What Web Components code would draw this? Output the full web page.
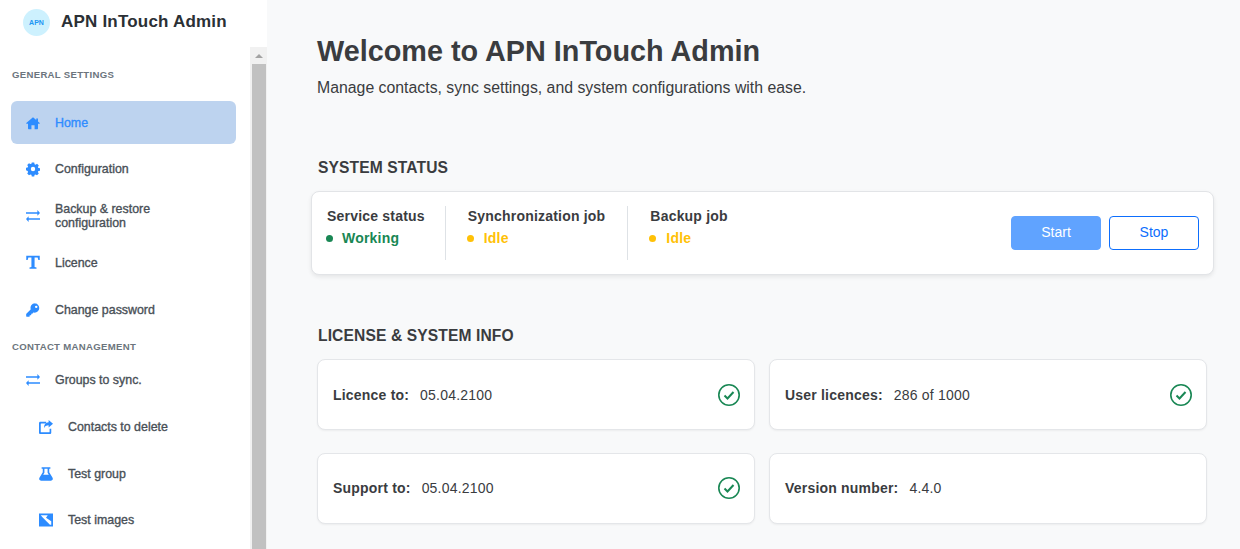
<!DOCTYPE html>
<html lang="en">
<head>
<meta charset="utf-8">
<title>APN InTouch Admin</title>
<style>
	html, body { margin: 0; height: 100%; overflow: hidden; }
	body { font-family: "Liberation Sans", Arial, sans-serif; color: #3a3c3f; background: #f8f9fa; }
</style>
</head>
<body>
<admin-shell>
	<side-bar slot="side">
		<nav-heading>General settings</nav-heading>
		<nav-item icon="home" active style="margin-top:20px;margin-bottom:3px">Home</nav-item>
		<nav-item icon="cog">Configuration</nav-item>
		<nav-item icon="exchange">Backup &amp; restore configuration</nav-item>
		<nav-item icon="font">Licence</nav-item>
		<nav-item icon="key">Change password</nav-item>
		<nav-heading style="margin-top:10px;margin-bottom:5px">Contact management</nav-heading>
		<nav-item icon="exchange">Groups to sync.</nav-item>
		<nav-item icon="share" sub>Contacts to delete</nav-item>
		<nav-item icon="flask" sub style="margin-bottom:3px">Test group</nav-item>
		<nav-item icon="image" sub>Test images</nav-item>
	</side-bar>
	<page-head></page-head>
	<section-title style="margin:58px 0 0 1px">System status</section-title>
	<status-card style="margin-top:13px">
		<status-cell label="Service status" state="Working" tone="ok"></status-cell>
		<status-cell label="Synchronization job" state="Idle" tone="idle"></status-cell>
		<status-cell label="Backup job" state="Idle" tone="idle"></status-cell>
	</status-card>
	<section-title style="margin:51px 0 0 1px">License &amp; system info</section-title>
	<info-grid>
		<info-card label="Licence to:" value="05.04.2100" check></info-card>
		<info-card label="User licences:" value="286 of 1000" check></info-card>
		<info-card label="Support to:" value="05.04.2100" check style="padding-bottom:1px"></info-card>
		<info-card label="Version number:" value="4.4.0" style="padding-bottom:1px"></info-card>
	</info-grid>
</admin-shell>

<script>
const ICONS = {
	home: '<path d="M8 1.500 .3 8.100c-.3.3-.1.700.3.700h1.700v5.600c0 .4.3.7.7.7h3.200v-4.600h3.600v4.600h3.200c.4 0 .7-.3.7-.7V8.800h1.700c.4 0 .6-.4.3-.7l-2-1.700V2.800h-2v1.900z"/>',
	cog: '<path fill-rule="evenodd" d="M6.600.6h2.800l.4 1.900c.4.1.8.3 1.100.5l1.700-1 2 2-1 1.700c.2.4.4.7.5 1.100l1.900.4v2.800l-1.900.4c-.1.4-.3.8-.5 1.100l1 1.700-2 2-1.700-1c-.3.2-.7.4-1.100.5l-.4 1.900H6.600l-.4-1.900c-.4-.1-.8-.3-1.100-.5l-1.700 1-2-2 1-1.700c-.2-.3-.4-.7-.5-1.100L0 9.400V6.600l1.900-.4c.1-.4.3-.7.5-1.100l-1-1.700 2-2 1.700 1c.3-.2.7-.4 1.100-.5zM8 5.500a2.500 2.500 0 1 0 0 5 2.500 2.500 0 0 0 0-5z"/>',
	exchange: '<path d="M0 3.600h13V1.200L16 4.500l-3 3.300V5.400H0zM16 10.600H3V8.200L0 11.500l3 3.300v-2.400H16z"/>',
	font: '<path transform="translate(0 -1)" d="M.3 .6h15.400v5h-1.600l-.8-2.800H9.800v10.800l2.200.5v1.500H4v-1.500l2.200-.5V2.800H2.700l-.8 2.800H.3z"/>',
	key: '<path fill-rule="evenodd" d="M10.300.4a5.300 5.300 0 0 0-5 7L.4 12.300c-.1.1-.2.3-.2.4v2.400c0 .3.3.6.6.6h2.900c.3 0 .5-.2.5-.5V13.900h1.300c.3 0 .5-.2.5-.5V12.200h1.200l1.200-1.300c.4.1.9.2 1.400.2a5.300 5.300 0 0 0 0-10.700zM11.700 3a1.400 1.400 0 1 1 0 2.800 1.400 1.400 0 0 1 0-2.800z"/>',
	share: '<path d="M1.500 2h6.700v1.900H2.700c-.4 0-.7.3-.7.7v8.700c0 .4.3.7.7.7h8.700c.4 0 .7-.3.7-.7v-3.300h1.900v4.500c0 .8-.7 1.500-1.500 1.500H1.500C.7 16 0 15.300 0 14.500V3.500C0 2.700.7 2 1.500 2z"/><path d="M11 0l5 4.300-5 4.300V6C8.300 6 6.700 6.800 5.800 9.400 5.600 5.600 7.600 3 11 2.700z"/>',
	flask: '<path fill-rule="evenodd" d="M3 .2h10v1.800h-1.300v4.100l3.800 6.300c.9 1.400-.1 3.300-1.800 3.300H2.300c-1.700 0-2.700-1.900-1.800-3.300l3.800-6.300V2H3zM6.200 2v4.600L4.800 8.800h6.400L9.800 6.600V2z"/>',
	image: '<path fill-rule="evenodd" d="M0 .5h16v15H0zM2 2.500l2.500 3 8 8H14V9.500L8 5.500l2-3z"/>'
};

class AdminShell extends HTMLElement {
	connectedCallback() {
		this.attachShadow( { mode: 'open' } );
		this.shadowRoot.innerHTML = `
			<style>
				:host { display: flex; height: 100vh; overflow: hidden; }
				aside { flex: none; width: 267px; background: #fff; }
				main { flex: 1; min-width: 0; padding: 31px 27px 0 50px; box-sizing: border-box; }
			</style>
			<aside><slot name="side"></slot></aside>
			<main><slot></slot></main>
		`;
	}
}

class SideBar extends HTMLElement {
	connectedCallback() {
		this.attachShadow( { mode: 'open' } );
		this.shadowRoot.innerHTML = `
			<style>
				:host { display: flex; flex-direction: column; height: 100vh; overflow: hidden; }
				.brand { flex: none; height: 47px; box-sizing: border-box; display: flex; align-items: flex-start; gap: 11px; padding: 9px 0 0 23px; }
				.logo { width: 27px; height: 27px; border-radius: 50%; background: #cdf1fe; color: #2196f3; display: flex; align-items: center; justify-content: center; font-size: 7px; font-weight: 700; }
				.name { font-size: 17px; font-weight: 700; color: #2b3035; line-height: 25px; letter-spacing: .2px; }
				.body { flex: 1; display: flex; min-height: 0; }
				.list { flex: 1; min-width: 0; padding: 22px 14px 0 11px; overflow: hidden; }
				.bar { flex: none; width: 17px; background: #f1f1f1; display: flex; flex-direction: column; align-items: center; }
				.up { flex: none; height: 17px; display: flex; align-items: center; justify-content: center; }
				.up i { width: 0; height: 0; border: 4px solid transparent; border-top: 0; border-bottom: 4px solid #a3a3a3; }
				.thumb { flex: 1; align-self: stretch; margin: 0 1px 0 2px; background: #c1c1c1; }
			</style>
			<div class="brand"><div class="logo">APN</div><div class="name">APN InTouch Admin</div></div>
			<div class="body">
				<div class="list"><slot></slot></div>
				<div class="bar"><div class="up"><i></i></div><div class="thumb"></div></div>
			</div>
		`;
	}
}

class NavHeading extends HTMLElement {
	connectedCallback() {
		this.attachShadow( { mode: 'open' } );
		this.shadowRoot.innerHTML = `
			<style>
				:host { display: block; padding-left: 1px; font-size: 9.6px; line-height: 12px; font-weight: 700; color: #6c757d; text-transform: uppercase; letter-spacing: .3px; }
			</style>
			<slot></slot>
		`;
	}
}

class NavItem extends HTMLElement {
	connectedCallback() {
		const icon = ICONS[ this.getAttribute( 'icon' ) ];
		this.attachShadow( { mode: 'open' } );
		this.shadowRoot.innerHTML = `
			<style>
				:host { display: flex; align-items: center; height: 43px; margin-bottom: 4px; border-radius: 6px; padding-left: 15px; font-size: 12.4px; line-height: 14px; color: #495057; -webkit-text-stroke: .35px currentColor; box-sizing: border-box; }
				:host([sub]) { padding-left: 28px; }
				:host([active]) { background: #bdd3ef; color: #2f8cff; }
				svg { flex: none; width: 14px; height: 14px; fill: #2d8cff; margin-right: 15px; overflow: visible; }
				span { max-width: 150px; }
			</style>
			<svg viewBox="0 0 16 16">${ icon }</svg><span><slot></slot></span>
		`;
	}
}

class PageHead extends HTMLElement {
	connectedCallback() {
		this.attachShadow( { mode: 'open' } );
		this.shadowRoot.innerHTML = `
			<style>
				:host { display: block; }
				h1 { margin: 0; font-size: 28.8px; line-height: 40px; font-weight: 700; color: #3a3c3f; }
				p { margin: 5px 0 0; font-size: 15.84px; line-height: 24px; color: #3a3c3f; }
			</style>
			<h1>Welcome to APN InTouch Admin</h1>
			<p>Manage contacts, sync settings, and system configurations with ease.</p>
		`;
	}
}

class SectionTitle extends HTMLElement {
	connectedCallback() {
		this.attachShadow( { mode: 'open' } );
		this.shadowRoot.innerHTML = `
			<style>
				:host { display: block; font-size: 15.6px; line-height: 20px; font-weight: 700; color: #3a3c3f; text-transform: uppercase; letter-spacing: .12px; }
			</style>
			<slot></slot>
		`;
	}
}

class StatusCard extends HTMLElement {
	connectedCallback() {
		this.attachShadow( { mode: 'open' } );
		this.shadowRoot.innerHTML = `
			<style>
				:host { display: flex; align-items: center; justify-content: space-between; height: 84px; width: 903px; margin-left: -6px; box-sizing: border-box; padding: 0 14px 0 15px; background: #fff; border: 1px solid #e2e4e7; border-radius: 8px; box-shadow: 0 2px 4px rgba(0,0,0,.08); }
				.cells { display: flex; align-items: stretch; height: 54px; }
				.btns { display: flex; gap: 8px; }
				button { width: 90px; height: 34px; box-sizing: border-box; border-radius: 4px; font: 14px/20px "Liberation Sans", Arial, sans-serif; padding: 0 0 2px; }
				.start { background: #60a3ff; border: 1px solid #60a3ff; color: #fff; }
				.stop { background: #fff; border: 1px solid #0d6efd; color: #0d6efd; }
			</style>
			<div class="cells"><slot></slot></div>
			<div class="btns"><button class="start">Start</button><button class="stop">Stop</button></div>
		`;
	}
}

class StatusCell extends HTMLElement {
	connectedCallback() {
		const ok = this.getAttribute( 'tone' ) === 'ok';
		const tone = ok ? '#198754' : '#ffc107';
		this.attachShadow( { mode: 'open' } );
		this.shadowRoot.innerHTML = `
			<style>
				:host { display: block; padding-right: 22px; margin-right: 22px; border-right: 1px solid #dee2e6; }
				:host(:first-child) { padding-right: 20px; }
				:host(:last-child) { border-right: 0; margin-right: 0; padding-right: 0; }
				.label { font-size: 14px; line-height: 20px; font-weight: 700; color: #3a3c3f; letter-spacing: .2px; }
				.state { display: flex; align-items: center; margin-top: 2px; font-size: 14px; line-height: 20px; font-weight: 700; color: ${ tone }; letter-spacing: .2px; }
				i { width: 7px; height: 7px; border-radius: 50%; background: ${ tone }; margin: 0 ${ ok ? 9 : 10 }px 0 -1px; }
			</style>
			<div class="label">${ this.getAttribute( 'label' ) }</div>
			<div class="state"><i></i>${ this.getAttribute( 'state' ) }</div>
		`;
	}
}

class InfoGrid extends HTMLElement {
	connectedCallback() {
		this.attachShadow( { mode: 'open' } );
		this.shadowRoot.innerHTML = `
			<style>
				:host { display: grid; grid-template-columns: 437.5px 437.5px; column-gap: 14.5px; row-gap: 23px; margin-top: 13px; }
			</style>
			<slot></slot>
		`;
	}
}

class InfoCard extends HTMLElement {
	connectedCallback() {
		const check = this.hasAttribute( 'check' ) ? `<svg viewBox="0 0 22 22"><circle cx="11" cy="11" r="10.200"/><path d="M6.500 11.500l3 3 6-6.500"/></svg>` : '';
		this.attachShadow( { mode: 'open' } );
		this.shadowRoot.innerHTML = `
			<style>
				:host { display: flex; align-items: center; height: 71px; box-sizing: border-box; padding: 0 13.5px 0 15px; background: #fff; border: 1px solid #e4e6e9; border-radius: 8px; box-shadow: 0 1px 2px rgba(0,0,0,.05); font-size: 14px; color: #3a3c3f; }
				b { margin-right: 11px; letter-spacing: .2px; }
				span { flex: 1; letter-spacing: .2px; }
				svg { width: 22px; height: 22px; fill: none; stroke: #198754; stroke-width: 1.600; }
				svg path { stroke-width: 2; }
			</style>
			<b>${ this.getAttribute( 'label' ) }</b><span>${ this.getAttribute( 'value' ) }</span>${ check }
		`;
	}
}

customElements.define( 'admin-shell', AdminShell );
customElements.define( 'side-bar', SideBar );
customElements.define( 'nav-heading', NavHeading );
customElements.define( 'nav-item', NavItem );
customElements.define( 'page-head', PageHead );
customElements.define( 'section-title', SectionTitle );
customElements.define( 'status-card', StatusCard );
customElements.define( 'status-cell', StatusCell );
customElements.define( 'info-grid', InfoGrid );
customElements.define( 'info-card', InfoCard );
</script>
</body>
</html>
